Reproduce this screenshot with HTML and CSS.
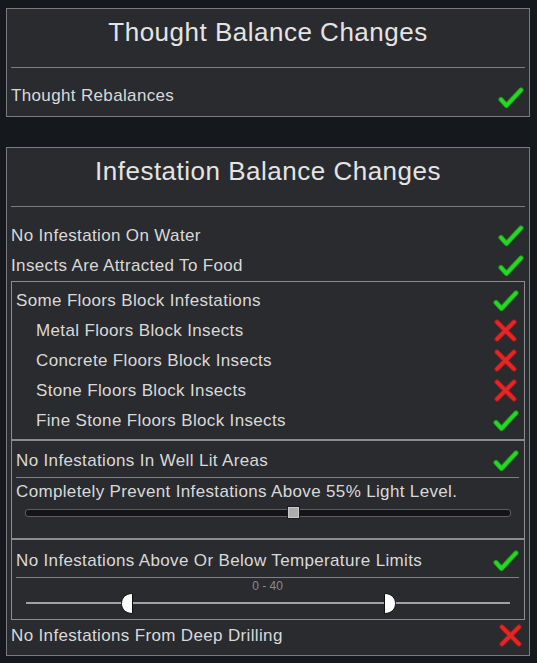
FILE: index.html
```html
<!DOCTYPE html>
<html>
<head>
<meta charset="utf-8">
<link rel="stylesheet" href="styles.css">
</head>
<body>
<div class="page">
  <section class="panel">
    <div class="title">Thought Balance Changes</div>
    <div class="sep"></div>
    <div class="body first">
      <div class="row"><span>Thought Rebalances</span><svg class="ico" viewBox="0 0 27 23"><path class="ck-o" d="M4 13.5 L9.5 19.5 L24 4"/><path class="ck" d="M4 13.5 L9.5 19.5 L24 4"/></svg></div>
    </div>
  </section>

  <section class="panel">
    <div class="title">Infestation Balance Changes</div>
    <div class="sep"></div>
    <div class="body">
      <div class="row"><span>No Infestation On Water</span><svg class="ico" viewBox="0 0 27 23"><path class="ck-o" d="M4 13.5 L9.5 19.5 L24 4"/><path class="ck" d="M4 13.5 L9.5 19.5 L24 4"/></svg></div>
      <div class="row"><span>Insects Are Attracted To Food</span><svg class="ico" viewBox="0 0 27 23"><path class="ck-o" d="M4 13.5 L9.5 19.5 L24 4"/><path class="ck" d="M4 13.5 L9.5 19.5 L24 4"/></svg></div>

      <div class="box b1">
        <div class="row"><span>Some Floors Block Infestations</span><svg class="ico" viewBox="0 0 27 23"><path class="ck-o" d="M4 13.5 L9.5 19.5 L24 4"/><path class="ck" d="M4 13.5 L9.5 19.5 L24 4"/></svg></div>
        <div class="row sub"><span>Metal Floors Block Insects</span><svg class="ico x" viewBox="0 0 25 25"><path class="xx-o" d="M4 4 L21 21 M21 4 L4 21"/><path class="xx" d="M4 4 L21 21 M21 4 L4 21"/></svg></div>
        <div class="row sub"><span>Concrete Floors Block Insects</span><svg class="ico x" viewBox="0 0 25 25"><path class="xx-o" d="M4 4 L21 21 M21 4 L4 21"/><path class="xx" d="M4 4 L21 21 M21 4 L4 21"/></svg></div>
        <div class="row sub"><span>Stone Floors Block Insects</span><svg class="ico x" viewBox="0 0 25 25"><path class="xx-o" d="M4 4 L21 21 M21 4 L4 21"/><path class="xx" d="M4 4 L21 21 M21 4 L4 21"/></svg></div>
        <div class="row sub"><span>Fine Stone Floors Block Insects</span><svg class="ico" viewBox="0 0 27 23"><path class="ck-o" d="M4 13.5 L9.5 19.5 L24 4"/><path class="ck" d="M4 13.5 L9.5 19.5 L24 4"/></svg></div>
      </div>

      <div class="box b2">
        <div class="row"><span>No Infestations In Well Lit Areas</span><svg class="ico" viewBox="0 0 27 23"><path class="ck-o" d="M4 13.5 L9.5 19.5 L24 4"/><path class="ck" d="M4 13.5 L9.5 19.5 L24 4"/></svg></div>
        <div class="isep"></div>
        <div class="row after-sep"><span>Completely Prevent Infestations Above 55% Light Level.</span></div>
        <div class="slider">
          <div class="track"><div class="thumb" style="left: 261px"></div></div>
        </div>
      </div>

      <div class="box b3">
        <div class="row"><span>No Infestations Above Or Below Temperature Limits</span><svg class="ico" viewBox="0 0 27 23"><path class="ck-o" d="M4 13.5 L9.5 19.5 L24 4"/><path class="ck" d="M4 13.5 L9.5 19.5 L24 4"/></svg></div>
        <div class="isep"></div>
        <div class="rlabel">0 - 40</div>
        <div class="range">
          <div class="rline"></div>
          <svg class="rh" style="left: 95px" viewBox="0 0 12 21"><path d="M11.5 0.5 L11.5 20.5 C4.5 20.5 0.5 16 0.5 10.5 C0.5 5 4.5 0.5 11.5 0.5 Z"/></svg>
          <svg class="rh" style="left: 358px" viewBox="0 0 12 21"><path d="M0.5 0.5 L0.5 20.5 C7.5 20.5 11.5 16 11.5 10.5 C11.5 5 7.5 0.5 0.5 0.5 Z"/></svg>
        </div>
      </div>

      <div class="row"><span>No Infestations From Deep Drilling</span><svg class="ico x" viewBox="0 0 25 25"><path class="xx-o" d="M4 4 L21 21 M21 4 L4 21"/><path class="xx" d="M4 4 L21 21 M21 4 L4 21"/></svg></div>
    </div>
  </section>
</div>
</body>
</html>
```

FILE: styles.css
```css
html, body {
  margin: 0;
  padding: 0;
  background: #15181d;
}
body {
  font-family: "Liberation Sans", Arial, sans-serif;
  color: #d9d9d9;
}
.page {
  padding: 8px 0 0 6px;
  display: flex;
  flex-direction: column;
  gap: 30px;
}
.panel {
  width: 522px;
  border: 1px solid #7b7b7d;
  background: #2a2b2e;
  display: flex;
  flex-direction: column;
}
.title {
  height: 46px;
  line-height: 46px;
  text-align: center;
  font-size: 26px;
  letter-spacing: 0.5px;
  color: #e4e4e4;
}
.sep {
  height: 1px;
  margin: 12px 4px 0 4px;
  background: #7d7d7f;
}
.body {
  padding: 13px 5px 5px 4px;
  display: flex;
  flex-direction: column;
}
.body.first {
  padding-top: 12px;
  padding-bottom: 6px;
}
.body.first .ico {
  margin-top: 4px;
}
.row {
  height: 30px;
  display: flex;
  align-items: center;
  justify-content: space-between;
  font-size: 17px;
  letter-spacing: 0.35px;
  white-space: nowrap;
}
.row span {
  padding-top: 2px;
}
.row.sub {
  padding-left: 20px;
}
.row.after-sep {
  margin-top: -2px;
}
.ico {
  width: 27px;
  height: 23px;
  flex: none;
}
.ico.x {
  width: 25px;
  height: 25px;
  margin-right: 1px;
}
.ck, .ck-o, .xx, .xx-o {
  fill: none;
  stroke-linecap: round;
  stroke-linejoin: round;
}
.ck-o { stroke: #159a15; stroke-width: 5.2; }
.ck { stroke: #27d627; stroke-width: 3.4; }
.xx-o { stroke: #a81b1b; stroke-width: 5.2; }
.xx { stroke: #e42626; stroke-width: 3.4; }

.box {
  border: 1px solid #8c8c8e;
  margin-right: -1px;
  padding: 0 5px 0 4px;
  display: flex;
  flex-direction: column;
}
.b1 {
  margin-top: 1px;
  padding-top: 3px;
  padding-bottom: 4px;
}
.b2 {
  padding-top: 4px;
}
.b3 {
  padding-top: 5px;
  padding-bottom: 5px;
}
.isep {
  height: 1px;
  margin: 2px 0 0 0;
  background: #808082;
  position: relative;
  z-index: 1;
}
.slider {
  padding: 3px 8px 21px 9px;
}
.track {
  position: relative;
  height: 6px;
  border: 1px solid #5e5e60;
  border-radius: 3px;
  background: #141416;
}
.thumb {
  position: absolute;
  top: -4px;
  width: 11px;
  height: 11px;
  border: 1px solid #1c1c1c;
  background: #adadad;
  box-shadow: inset 0 0 0 1px #c9c9c9;
}
.rlabel {
  margin-top: 2px;
  height: 12px;
  line-height: 12px;
  font-size: 12px;
  text-align: center;
  color: #8a8a8c;
}
.range {
  position: relative;
  height: 22px;
  margin: 0 9px 0 10px;
}
.rline {
  position: absolute;
  left: 0;
  right: 0;
  top: 10px;
  height: 2px;
  background: #a2a2a4;
}
.rh {
  position: absolute;
  top: 1px;
  width: 12px;
  height: 21px;
}
.rh path {
  fill: #ffffff;
  stroke: #111111;
  stroke-width: 1;
}
```
